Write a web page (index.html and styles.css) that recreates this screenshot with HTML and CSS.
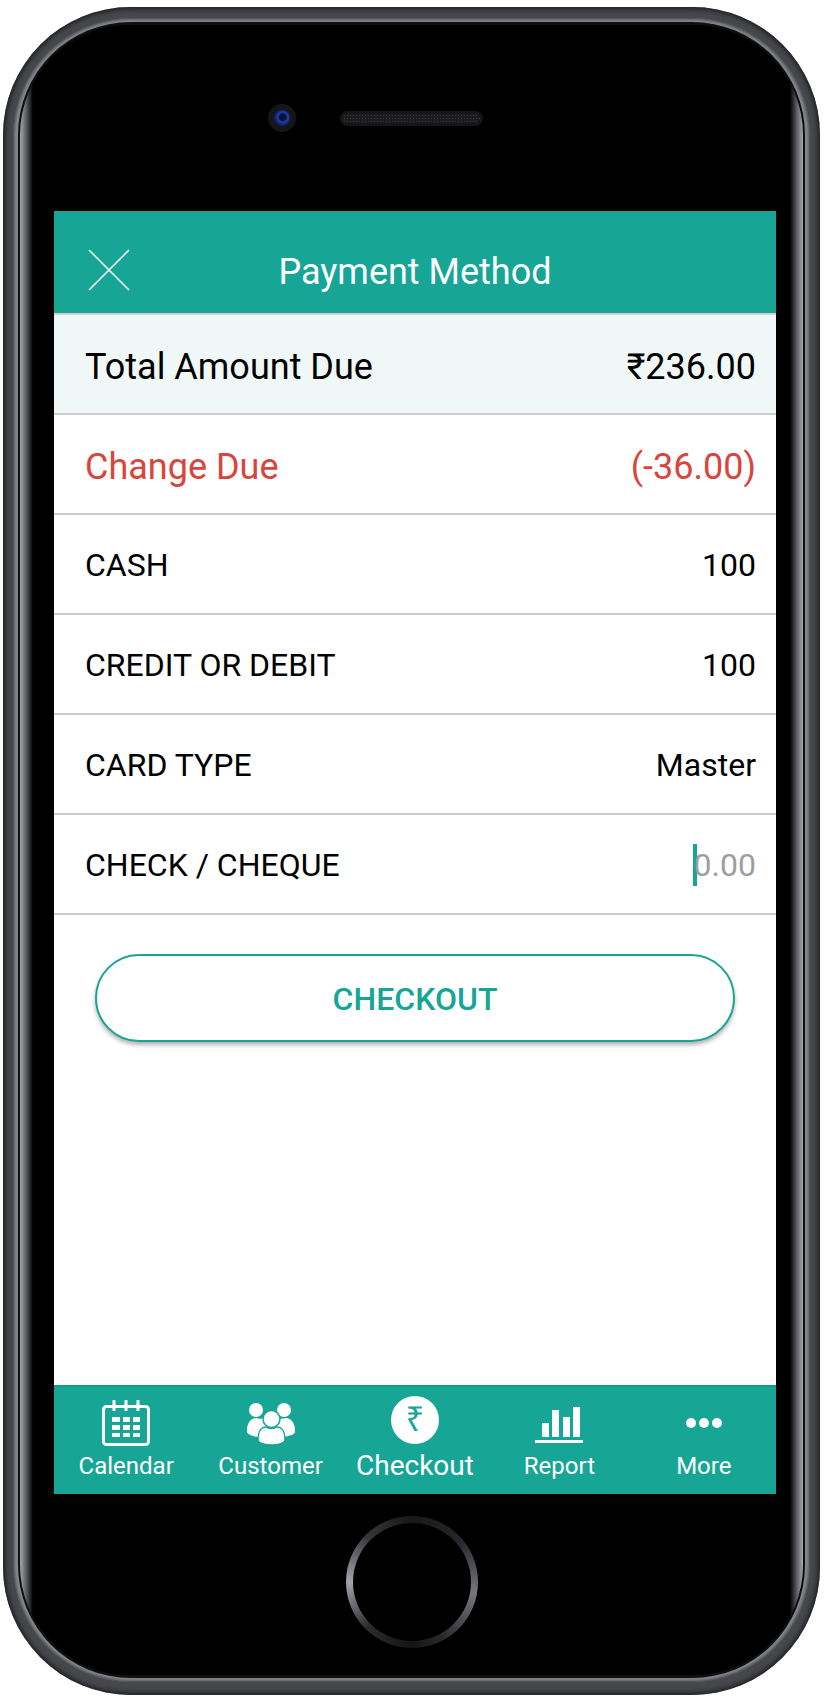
FILE: index.html
```html
<!DOCTYPE html>
<html lang="en">
<head>
    <meta charset="UTF-8">
    <title>Payment Method</title>
    <meta name="viewport" content="width=device-width, initial-scale=1">
    <link rel="stylesheet" href="styles.css">
</head>
<body>
    <div class="phone">
        <div class="phone-rim">
            <div class="phone-gap">
                <div class="phone-face">
                    <div class="phone-inner">
                        <div class="phone-top">
                            <div class="camera"><div class="lens"></div></div>
                            <div class="speaker"></div>
                        </div>

                        <div class="screen">
                            <header class="app-header">
                                <svg class="close-icon" viewBox="0 0 42 42"><path d="M1 1 L41 41 M41 1 L1 41" /></svg>
                                <h1>Payment Method</h1>
                            </header>

                            <main class="app-main">
                                <div class="row row-total"><span>Total Amount Due</span><span class="rupee-text">₹236.00</span></div>
                                <div class="row row-change"><span>Change Due</span><span>(-36.00)</span></div>
                                <div class="row"><span>CASH</span><span>100</span></div>
                                <div class="row"><span>CREDIT OR DEBIT</span><span>100</span></div>
                                <div class="row"><span>CARD TYPE</span><span>Master</span></div>
                                <div class="row"><span>CHECK / CHEQUE</span><span class="placeholder"><i class="caret"></i>0.00</span></div>
                                <button class="checkout-btn" type="button">CHECKOUT</button>
                            </main>

                            <nav class="tabbar">
                                <div class="tab">
                                    <svg class="tab-icon" width="48" height="48" viewBox="0 0 48 48">
                                        <rect x="1.500" y="8.500" width="45" height="38" rx="3" fill="none" stroke="#fff" stroke-width="3" />
                                        <path d="M12 2 V13 M24 2 V13 M36 2 V13" stroke="#fff" stroke-width="3" fill="none" />
                                        <path fill="#fff" d="M10 19h8v5h-8z M21 19h7v5h-7z M31 19h7v5h-7z M10 27h8v5h-8z M21 27h7v5h-7z M31 27h7v5h-7z M10 35h8v4h-8z M21 35h7v4h-7z M31 35h7v4h-7z" />
                                    </svg>
                                    <span>Calendar</span>
                                </div>
                                <div class="tab">
                                    <svg class="tab-icon" width="50" height="48" viewBox="0 0 50 48">
                                        <circle cx="10" cy="12" r="7" fill="#fff" />
                                        <circle cx="38" cy="12" r="7" fill="#fff" />
                                        <path fill="#fff" d="M1 32 C1 25 5 20 10 20 C13 21 16 21 18 20 L24 24 L12 39 C6 38 1 36 1 34 Z" />
                                        <path fill="#fff" d="M49 32 C49 25 45 20 40 20 C37 21 34 21 32 20 L26 24 L38 39 C44 38 49 36 49 34 Z" />
                                        <circle cx="25.500" cy="21" r="8.500" fill="#fff" stroke="#17a595" stroke-width="1.500" />
                                        <path fill="#fff" stroke="#17a595" stroke-width="1.500" d="M12 42 C12 34 15 29 20 29 C23 31 28 31 31 29 C36 29 39 34 39 42 C39 45 32 47 25.500 47 C19 47 12 45 12 42 Z" />
                                    </svg>
                                    <span>Customer</span>
                                </div>
                                <div class="tab tab-active">
                                    <div class="rupee-circle">₹</div>
                                    <span>Checkout</span>
                                </div>
                                <div class="tab">
                                    <svg class="tab-icon" width="50" height="48" viewBox="0 0 50 48">
                                        <path fill="#fff" d="M8 25h7v14h-7z M18 12h7v27h-7z M29 19h7v20h-7z M39 9h7v30h-7z M1 42h48v3h-48z" />
                                    </svg>
                                    <span>Report</span>
                                </div>
                                <div class="tab">
                                    <svg class="tab-icon" width="38" height="48" viewBox="0 0 38 48">
                                        <circle cx="6" cy="25" r="5" fill="#fff" />
                                        <circle cx="19" cy="25" r="5" fill="#fff" />
                                        <circle cx="32" cy="25" r="5" fill="#fff" />
                                    </svg>
                                    <span>More</span>
                                </div>
                            </nav>
                        </div>

                        <div class="phone-bottom">
                            <div class="home-btn"><div class="home-btn-inner"></div></div>
                        </div>
                    </div>
                </div>
            </div>
        </div>
    </div>
</body>
</html>
```

FILE: styles.css
```css
html, body { margin: 0; background: #fff; }
body { font-family: Roboto, "Liberation Sans", sans-serif; color: #000; }

/* phone body, outside in */
.phone { width: 817px; height: 1688px; margin: 7px 0 0 3px; box-sizing: border-box; padding: 11px 10px 13px; border-radius: 128px; background: #46474a; box-shadow: inset 0 0 5px 2px #1c1d20; }
.phone-rim { height: 100%; box-sizing: border-box; padding: 4px 5px; border-radius: 118px; background: #85868a; box-shadow: inset 0 0 3px 1px #3c3d40; }
.phone-gap { height: 100%; box-sizing: border-box; padding: 3px 2px; border-radius: 113px; background: #0e0f10; }
.phone-face { height: 100%; overflow: hidden; border-radius: 110px; background: linear-gradient(to right, #a6a7aa, #5f6064 6px, #000 13px, #000 calc(100% - 13px), #5f6064 calc(100% - 6px), #a6a7aa); }
.phone-inner { height: 100%; margin: 0 13px; box-sizing: border-box; padding: 0 14px 0 21px; border-radius: 60px / 115px; background: #000; display: flex; flex-direction: column; }

.phone-top { height: 186px; flex: none; display: flex; align-items: center; justify-content: center; gap: 44px; padding-right: 80px; }
.camera { width: 28px; height: 28px; box-sizing: border-box; padding: 6px; border-radius: 50%; background: #161618; }
.lens { width: 16px; height: 16px; border-radius: 50%; background: radial-gradient(circle at 55% 45%, #0a1230 0 3px, #1c3cae 5px, #10205f 8px); }
.speaker { width: 143px; height: 15px; box-sizing: border-box; border: 3px solid #161618; border-radius: 8px; background: #1c1c1e radial-gradient(#3a3a3c 1px, transparent 1px) 0 0 / 3px 3px; }

.screen { height: 1283px; flex: none; display: flex; flex-direction: column; background: #fff; }
.app-header { height: 104px; box-sizing: border-box; flex: none; display: flex; align-items: center; justify-content: center; position: relative; padding-top: 20px; background: #17a595; border-bottom: 2px solid #d2d2d2; }
.app-header h1 { margin: 0; color: #fff; font-size: 36px; font-weight: 400; }
.close-icon { position: absolute; left: 34px; top: 38px; width: 42px; height: 42px; fill: none; stroke: #fff; stroke-width: 1.500; }

.app-main { flex: 1; }
.row { height: 100px; box-sizing: border-box; display: flex; align-items: center; justify-content: space-between; padding: 2px 20px 0 31px; font-size: 32px; border-bottom: 2px solid #ccc; }
.row-total { padding-top: 5px; font-size: 36px; background: #f0f8f7; }
.row-change { padding-top: 5px; font-size: 36px; color: #d9453c; }
.rupee-text { font-family: Roboto, "Noto Sans", sans-serif; }
.placeholder { color: #9e9e9e; display: flex; align-items: center; }
.caret { width: 4px; height: 42px; margin-right: -3px; background: #17a595; }

.checkout-btn { display: block; width: 640px; height: 88px; margin: 39px auto 0; padding-top: 3px; background: #fff; border: 2px solid #17a595; border-radius: 44px; box-shadow: 0 3px 4px rgba(0, 0, 0, .3); color: #17a595; font-family: inherit; font-size: 32px; font-weight: 500; }

.tabbar { height: 109px; flex: none; display: grid; grid-template-columns: repeat(5, 1fr); box-sizing: border-box; border-top: 2px solid #129a8b; background: #17a595; color: #fff; font-size: 24px; }
.tab { display: flex; flex-direction: column; align-items: center; padding-top: 11px; }
.tab-icon { height: 48px; margin-bottom: 6px; }
.tab-active { font-size: 28px; padding-top: 9px; }
.rupee-circle { width: 48px; height: 48px; margin-bottom: 5px; border-radius: 50%; background: #fff; color: #17a595; font-family: "Noto Sans", sans-serif; font-size: 33px; font-weight: 400; line-height: 46px; text-align: center; }

.phone-bottom { flex: 1; display: flex; align-items: center; justify-content: center; padding: 0 6px 6px 0; }
.home-btn { width: 132px; height: 132px; box-sizing: border-box; padding: 7px; border-radius: 50%; background: conic-gradient(#18181a 0deg, #26272a 50deg, #77787c 100deg, #2a2b2e 150deg, #141416 180deg, #2c2d30 225deg, #a3a4a8 270deg, #36373a 315deg, #18181a 360deg); }
.home-btn-inner { height: 100%; border-radius: 50%; background: #000; }
```
